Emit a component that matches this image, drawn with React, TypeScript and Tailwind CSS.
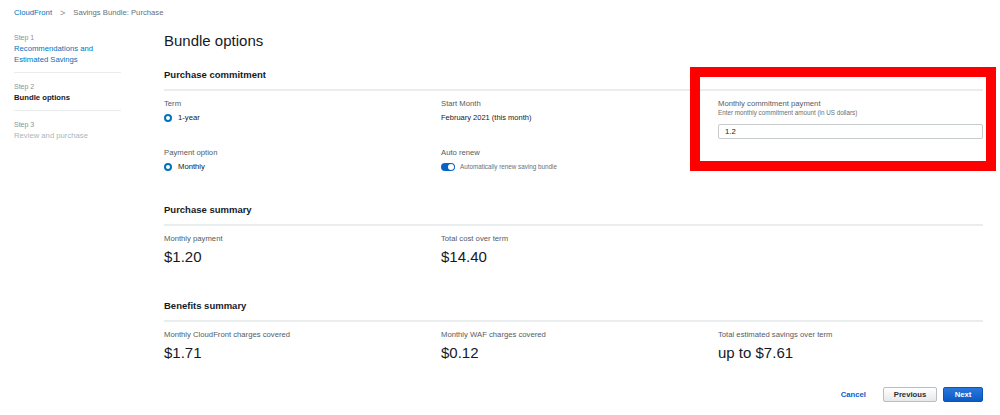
export default function App() {
  const steps = [
    { step: 'Step 1', title: ['Recommendations and', 'Estimated Savings'], state: 'done' },
    { step: 'Step 2', title: ['Bundle options'], state: 'current' },
    { step: 'Step 3', title: ['Review and purchase'], state: 'todo' },
  ];

  return (
    <div className="relative w-[1000px] h-[415px] overflow-hidden bg-white font-['Liberation_Sans',Arial,sans-serif] text-[#16191f]">
      {/* Breadcrumb */}
      <div className="flex items-center pt-[8px] pl-[14px] text-[7.7px] leading-[10px]">
        <span className="text-[#0073bb]">CloudFront</span>
        <span className="mx-[8px] text-[#879596] text-[9px]">&gt;</span>
        <span className="text-[#687078]">Savings Bundle: Purchase</span>
      </div>

      <div className="flex pl-[14px]">
        {/* Wizard steps */}
        <nav className="w-[107px] mt-[15px] shrink-0">
          {steps.map((s, i) => (
            <div
              key={s.step}
              className={i < steps.length - 1 ? 'border-b border-[#eaeded] pb-[7px] mb-[9px]' : ''}
            >
              <div className="text-[7px] leading-[10px] text-[#879596]">{s.step}</div>
              {s.title.map((t) => (
                <div
                  key={t}
                  className={
                    'text-[7.7px] leading-[11px] ' +
                    (s.state === 'done'
                      ? 'text-[#0073bb]'
                      : s.state === 'current'
                        ? 'font-bold text-[#16191f]'
                        : 'text-[#aab7b8]')
                  }
                >
                  {t}
                </div>
              ))}
            </div>
          ))}
        </nav>

        {/* Main content */}
        <main className="ml-[43px] w-[819px] mt-[13px]">
          <h1 className="text-[15px] leading-[20px] font-normal">Bundle options</h1>

          {/* Purchase commitment */}
          <h2 className="mt-[17px] text-[9.5px] leading-[14px] font-bold pb-[7px] border-b-2 border-[#eaeded]">
            Purchase commitment
          </h2>
          <div className="grid grid-cols-[265px_265px_265px] gap-x-[12px] mt-[8px]">
            <div>
              <div className="text-[7.7px] leading-[10px] text-[#545b64]">Term</div>
              <label className="mt-[3px] flex items-center h-[12px] gap-[6px] text-[7.7px]">
                <span className="w-[8px] h-[8px] rounded-full border-[2.5px] border-[#0073bb] bg-white" />
                1-year
              </label>
              <div className="mt-[24px] text-[7.7px] leading-[10px] text-[#545b64]">Payment option</div>
              <label className="mt-[3px] flex items-center h-[12px] gap-[6px] text-[7.7px]">
                <span className="w-[8px] h-[8px] rounded-full border-[2.5px] border-[#0073bb] bg-white" />
                Monthly
              </label>
            </div>
            <div>
              <div className="text-[7.7px] leading-[10px] text-[#545b64]">Start Month</div>
              <div className="mt-[3px] h-[12px] flex items-center text-[7.5px]">February 2021 (this month)</div>
              <div className="mt-[24px] text-[7.7px] leading-[10px] text-[#545b64]">Auto renew</div>
              <div className="mt-[3px] flex items-center h-[12px] gap-[5px]">
                <span className="relative w-[14px] h-[8px] rounded-full bg-[#0a63c4]">
                  <span className="absolute right-[1px] top-[1px] w-[6px] h-[6px] rounded-full bg-white" />
                </span>
                <span className="text-[6.3px] text-[#687078]">Automatically renew saving bundle</span>
              </div>
            </div>
            <div>
              <div className="text-[7.7px] leading-[10px] text-[#545b64]">Monthly commitment payment</div>
              <div className="text-[6.3px] leading-[8px] text-[#687078]">Enter monthly commitment amount (in US dollars)</div>
              <input
                readOnly
                value="1.2"
                className="mt-[4px] w-full h-[15px] px-[6px] text-[7.7px] border border-[#c6cccc] rounded-[2px] outline-none text-[#16191f]"
              />
            </div>
          </div>

          {/* Purchase summary */}
          <h2 className="mt-[30px] text-[9.5px] leading-[14px] font-bold pb-[7px] border-b-2 border-[#eaeded]">
            Purchase summary
          </h2>
          <div className="grid grid-cols-[265px_265px_265px] gap-x-[12px] mt-[8px]">
            <Stat label="Monthly payment" value="$1.20" />
            <Stat label="Total cost over term" value="$14.40" />
          </div>

          {/* Benefits summary */}
          <h2 className="mt-[33px] text-[9.5px] leading-[14px] font-bold pb-[7px] border-b-2 border-[#eaeded]">
            Benefits summary
          </h2>
          <div className="grid grid-cols-[265px_265px_265px] gap-x-[12px] mt-[8px]">
            <Stat label="Monthly CloudFront charges covered" value="$1.71" />
            <Stat label="Monthly WAF charges covered" value="$0.12" />
            <Stat label="Total estimated savings over term" value="up to $7.61" />
          </div>

          {/* Actions */}
          <div className="mt-[25px] flex items-center justify-end">
            <button className="text-[7.7px] font-bold text-[#0b5dc9] mr-[17px]">Cancel</button>
            <button className="w-[54px] h-[15px] rounded-[2px] border border-[#b8bec2] bg-gradient-to-b from-white to-[#e6e8ea] text-[7.7px] font-bold text-[#2a2e33]">
              Previous
            </button>
            <button className="ml-[6px] w-[40px] h-[15px] rounded-[2px] border border-[#0a55b5] bg-gradient-to-b from-[#2778dc] to-[#0b5bc4] text-[7.7px] font-bold text-white">
              Next
            </button>
          </div>
        </main>
      </div>

      {/* Annotation highlight */}
      <div className="absolute left-[690px] top-[67px] w-[306px] h-[104px] border-[10px] border-[#ff0000] pointer-events-none" />
    </div>
  );
}

function Stat({ label, value }: { label: string; value: string }) {
  return (
    <div>
      <div className="text-[7.7px] leading-[10px] text-[#545b64]">{label}</div>
      <div className="mt-[4px] text-[15px] leading-[18px] text-[#16191f]">{value}</div>
    </div>
  );
}
